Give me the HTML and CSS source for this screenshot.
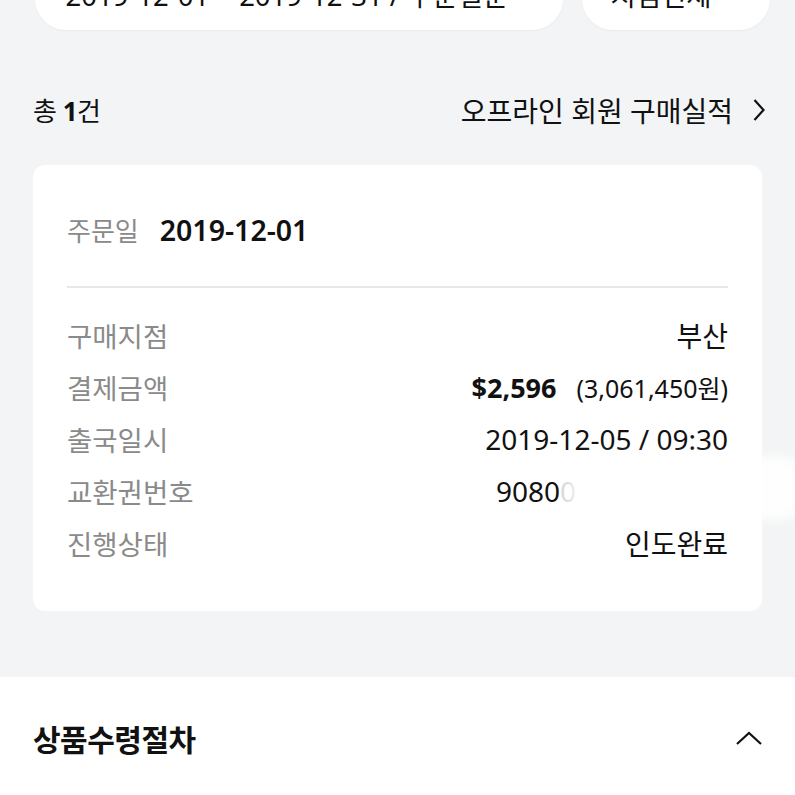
FILE: index.html
```html
<!DOCTYPE html>
<html lang="ko">
<head>
<meta charset="utf-8">
<title>구매내역</title>
<link rel="stylesheet" href="styles.css">
</head>
<body>
<div class="page">
  <div class="filters">
    <div class="pill pill-date">
      <span>2019-12-01 ~ 2019-12-31 / 주문일순</span>
      <svg class="chev-down" width="14" height="10" viewBox="0 0 14 10"><polyline points="1,2 7,8 13,2" fill="none" stroke="#222" stroke-width="2"/></svg>
    </div>
    <div class="pill pill-branch">
      <span>지점전체</span>
      <svg class="chev-down" width="14" height="10" viewBox="0 0 14 10"><polyline points="1,2 7,8 13,2" fill="none" stroke="#222" stroke-width="2"/></svg>
    </div>
  </div>

  <div class="summary">
    <div class="total">총 <b>1</b>건</div>
    <div class="link">
      <span>오프라인 회원 구매실적</span>
      <svg width="12" height="24" viewBox="0 0 12 24"><polyline points="1.5,2 10.5,12 1.5,22" fill="none" stroke="#111" stroke-width="2.2"/></svg>
    </div>
  </div>

  <div class="card">
    <div class="order-date">
      <span class="label label-sm">주문일</span>
      <span class="date">2019-12-01</span>
    </div>
    <div class="divider"></div>
    <div class="rows">
      <div class="row"><span class="label">구매지점</span><span class="value">부산</span></div>
      <div class="row"><span class="label">결제금액</span><span class="value"><b class="usd">$2,596</b><span class="krw">(3,061,450원)</span></span></div>
      <div class="row"><span class="label">출국일시</span><span class="value">2019-12-05 / 09:30</span></div>
      <div class="row"><span class="label">교환권번호</span><span class="value voucher">9080<span class="faint">0</span></span></div>
      <div class="row"><span class="label">진행상태</span><span class="value">인도완료</span></div>
    </div>
    <div class="smudge"></div>
  </div>

  <div class="section">
    <h2 class="section-title">상품수령절차</h2>
    <svg class="chev-up" width="28" height="16" viewBox="0 0 28 16"><polyline points="2,14 14,3 26,14" fill="none" stroke="#111" stroke-width="2.2"/></svg>
  </div>
</div>
</body>
</html>
```

FILE: styles.css
```css
* { box-sizing: border-box; }
html, body { margin: 0; padding: 0; }
body {
  background: #f2f4f5;
  font-family: "Noto Sans", "Noto Sans CJK KR", sans-serif;
  color: #111;
  overflow: hidden;
}
.page { position: relative; }

.filters {
  display: flex;
  gap: 19px;
  padding-left: 35px;
  margin-top: -32px;
}
.pill {
  height: 62px;
  background: #fff;
  border-radius: 31px;
  display: flex;
  align-items: center;
  justify-content: center;
  gap: 16px;
  padding-bottom: 11px;
  font-size: 27.5px;
  color: #111;
  box-shadow: 0 1px 2px rgba(0,0,0,0.04);
}
.pill-date { width: 528px; padding-left: 6px; }
.pill-branch { width: 188px; }

.summary {
  display: flex;
  justify-content: space-between;
  align-items: center;
  height: 40px;
  margin-top: 60px;
  padding: 0 30px 0 33px;
}
.total {
  font-size: 26px;
  letter-spacing: -0.5px;
}
.total b { font-weight: 700; }
.link {
  display: flex;
  align-items: center;
  gap: 20px;
  font-size: 28px;
}

.card {
  position: relative;
  margin: 35px 33px 0;
  background: #fff;
  border-radius: 12px;
  padding: 45px 34px 42px;
}
.order-date {
  display: flex;
  align-items: center;
  height: 40px;
  gap: 21px;
}
.order-date .date {
  font-size: 28.5px;
  font-weight: 600;
  color: #111;
}
.label {
  font-size: 27.5px;
  color: #8a8a8a;
}
.label-sm { font-size: 26px; }
.divider {
  height: 2px;
  background: #e6e7e8;
  margin: 36px 0 21px;
}
.row {
  display: flex;
  justify-content: space-between;
  align-items: center;
  height: 52px;
}
.value {
  font-size: 28px;
  color: #111;
}
.usd { font-size: 27px; font-weight: 700; margin-right: 20px; }
.krw { font-size: 25px; }
.voucher { margin-right: 152px; }
.faint { color: #d9d9d9; }

.smudge {
  position: absolute;
  left: 540px;
  top: 292px;
  width: 230px;
  height: 62px;
  background: #fff;
  border-radius: 20px;
  filter: blur(6px);
  opacity: 0.95;
}

.section {
  margin-top: 66px;
  background: #fff;
  height: 140px;
  display: flex;
  justify-content: space-between;
  align-items: flex-start;
  padding: 43px 32px 0 33px;
}
.section-title {
  margin: 0;
  font-size: 30px;
  line-height: 40px;
  font-weight: 700;
  letter-spacing: -0.5px;
}
.chev-up { margin-top: 10px; }
```
